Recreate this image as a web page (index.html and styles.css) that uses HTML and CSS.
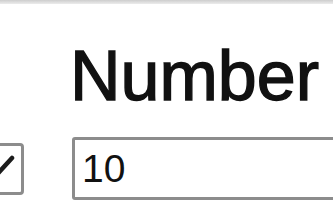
FILE: index.html
```html
<!DOCTYPE html>
<html lang="en">
<head>
    <meta charset="UTF-8">
    <meta name="viewport" content="width=device-width, initial-scale=1.0">
    <title>Number field</title>
    <link rel="stylesheet" href="styles.css">
</head>
<body>
    <div class="topbar"></div>
    <form class="form">
        <div></div>
        <label class="label" for="number">Number</label>

        <span class="check">
            <svg width="46" height="46" viewBox="0 0 46 46">
                <path d="M7 24 L17 34 L37 12" fill="none" stroke="#1c1c1c" stroke-width="4.5" stroke-linecap="round" stroke-linejoin="round"/>
            </svg>
        </span>
        <input class="input" id="number" type="text" value="10">
    </form>
</body>
</html>
```

FILE: styles.css
```css
* {
    margin: 0;
    padding: 0;
    box-sizing: border-box;
}

body {
    background-color: #fff;
    overflow: hidden;
    font-family: "Liberation Sans", Arial, sans-serif;
}

.topbar {
    height: 4px;
    background: linear-gradient(#cdcdcd, #ececec);
}

.form {
    display: grid;
    grid-template-columns: 52px auto;
    column-gap: 48px;
    row-gap: 25px;
    align-items: center;
    margin-left: -28px;
    padding-top: 37px;
}

.label {
    font-family: "Comic Sans MS", "Liberation Sans", sans-serif;
    font-size: 70px;
    line-height: 71px;
    color: #111;
    -webkit-text-stroke: 1.4px #111;
    margin-left: -2px;
}

.check {
    width: 52px;
    height: 52px;
    border: 3px solid #8c8c8c;
    border-radius: 4px;
    background-color: #fff;
}

.check svg {
    display: block;
}

.input {
    width: 300px;
    height: 63px;
    border: 3px solid #8c8c8c;
    border-radius: 3px;
    padding-left: 7px;
    font-family: "Liberation Sans", Arial, sans-serif;
    font-size: 39px;
    color: #111;
    background-color: #fff;
    outline: none;
}
```
